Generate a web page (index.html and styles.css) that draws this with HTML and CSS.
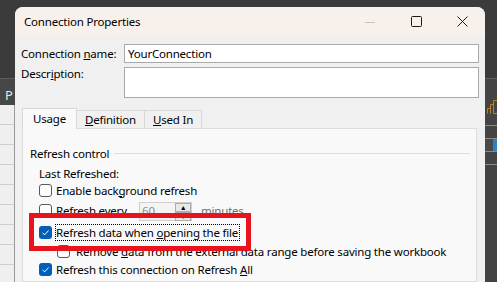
FILE: index.html
```html
<!DOCTYPE html>
<html lang="en">
<head>
    <meta charset="UTF-8">
    <meta name="viewport" content="width=device-width, initial-scale=1.0">
    <title>Connection Properties</title>
    <link rel="stylesheet" href="styles.css">
</head>
<body>
    <div class="desktop">
        <!-- worksheet behind the dialog, left edge -->
        <div class="sheet-left">
            <div class="sheet-top"></div>
            <div class="sheet-bar"><span>P</span></div>
            <div class="sheet-rows"></div>
        </div>

        <div class="dialog">
            <div class="titlebar">
                <span class="title">Connection Properties</span>
                <div class="caption">
                    <div class="cap">
                        <svg width="10" height="10" viewBox="0 0 10 10"><path d="M0 5.5H10" stroke="#c4c4c4" stroke-width="1"/></svg>
                    </div>
                    <div class="cap">
                        <svg width="11" height="11" viewBox="0 0 11 11"><rect x="0.5" y="0.5" width="10" height="10" rx="1" fill="none" stroke="#1a1a1a" stroke-width="1"/></svg>
                    </div>
                    <div class="cap">
                        <svg width="11" height="11" viewBox="0 0 11 11"><path d="M0.5 0.5L10.5 10.5M10.5 0.5L0.5 10.5" stroke="#1a1a1a" stroke-width="1"/></svg>
                    </div>
                </div>
            </div>

            <div class="dialog-body">
                <div class="field">
                    <label class="field-label">Connection <u>n</u>ame:</label>
                    <div class="text-input">YourConnection</div>
                </div>
                <div class="field field-desc">
                    <label class="field-label">Descr<u>i</u>ption:</label>
                    <div class="text-area"></div>
                </div>

                <div class="tab-area">
                    <div class="tabs">
                        <div class="tab active">Usa<u>g</u>e</div>
                        <div class="tab"><u>D</u>efinition</div>
                        <div class="tab"><u>U</u>sed In</div>
                    </div>
                    <div class="tab-panel">
                        <div class="group-title"><span>Refresh control</span><i class="group-line"></i></div>
                        <div class="row last-refreshed">Last Refreshed:</div>

                        <div class="row check-row">
                            <span class="check"></span>
                            <span>Enable back<u>g</u>round refresh</span>
                        </div>

                        <div class="row check-row every-row">
                            <span class="check"></span>
                            <span class="every-label">R<u>e</u>fresh every</span>
                            <div class="spinner">
                                <span class="spin-value">60</span>
                                <div class="spin-buttons">
                                    <div class="spin-btn">&#9650;</div>
                                    <div class="spin-btn">&#9660;</div>
                                </div>
                            </div>
                            <span class="muted">minutes</span>
                        </div>

                        <div class="row check-row open-row">
                            <span class="check checked">
                                <svg width="13" height="13" viewBox="0 0 13 13"><path d="M3.5 6.8L5.6 8.9L9.6 4.5" fill="none" stroke="#fff" stroke-width="1"/></svg>
                            </span>
                            <span class="focus-label">Refresh data when <u>o</u>pening the file</span>
                        </div>

                        <div class="row check-row sub-row">
                            <span class="check"></span>
                            <span>Remove <u>d</u>ata from the external data range before saving the workbook</span>
                        </div>

                        <div class="row check-row all-row">
                            <span class="check checked">
                                <svg width="13" height="13" viewBox="0 0 13 13"><path d="M3.5 6.8L5.6 8.9L9.6 4.5" fill="none" stroke="#fff" stroke-width="1"/></svg>
                            </span>
                            <span>Refresh this connection on Refresh <u>A</u>ll</span>
                        </div>

                        <!-- red annotation box -->
                        <div class="highlight"></div>
                    </div>
                </div>
            </div>
        </div>

        <!-- worksheet behind the dialog, right edge -->
        <div class="sheet-right">
            <div class="sheet-top"></div>
            <div class="sheet-icon">
                <svg width="11" height="14" viewBox="0 0 11 14"><path d="M0.5 13.5V8.5H3.5V13.5M3.5 13.5V4.5H6.5V13.5M6.5 13.5V0.5H10.5V13.5Z" fill="none" stroke="#c57f12" stroke-width="1"/></svg>
            </div>
            <div class="sheet-cell"></div>
            <div class="sheet-cell blue"></div>
            <div class="sheet-cell"></div>
            <div class="sheet-rest"></div>
        </div>
    </div>
</body>
</html>
```

FILE: styles.css
```css
* {
    margin: 0;
    padding: 0;
    box-sizing: border-box;
}

body {
    background: #3b3b3b;
    font-family: "Segoe UI", "Noto Sans", sans-serif;
    font-size: 11.5px;
    letter-spacing: -0.2px;
    color: #000;
    overflow: hidden;
}

.desktop {
    display: flex;
    height: 282px;
}

/* worksheet strips */
.sheet-left {
    width: 15px;
    flex-shrink: 0;
    display: flex;
    flex-direction: column;
}

.sheet-top {
    height: 79px;
    background: #3b3b3b;
    border-bottom: 1px solid #5e5e5e;
}

.sheet-bar {
    height: 26px;
    background: #474747;
    color: #e6e6e6;
    font-size: 13px;
    line-height: 13px;
    padding: 10px 0 0 5px;
}

.sheet-rows {
    flex: 1;
    background: repeating-linear-gradient(#efefef 0 19px, #cfcfcf 19px 20px);
    border-right: 1px solid #9a9a9a;
}

.sheet-right {
    flex: 1;
    display: flex;
    flex-direction: column;
    background: #444;
}

.sheet-icon {
    height: 47px;
    padding: 21px 0 0 2px;
    border-bottom: 1px solid #8a8a8a;
}

.sheet-cell {
    height: 13px;
    border-bottom: 1px solid #8a8a8a;
}

.sheet-cell.blue {
    background: linear-gradient(90deg, #4a4a4a 0 8px, #2f7fc4 8px);
}

.sheet-rest {
    flex: 1;
    background: #434343;
}

/* dialog */
.dialog {
    width: 470px;
    flex-shrink: 0;
    margin-top: 7px;
    background: #f0f0f0;
    border-radius: 8px 8px 0 0;
    display: flex;
    flex-direction: column;
    overflow: hidden;
}

.titlebar {
    height: 29px;
    background: #f8f0eb;
    display: flex;
    align-items: center;
}

.title {
    flex: 1;
    padding-left: 9px;
}

.caption {
    display: flex;
    height: 100%;
}

.cap {
    width: 46px;
    display: flex;
    align-items: center;
    justify-content: center;
}

.dialog-body {
    flex: 1;
    padding: 8px 6px 0 6px;
    display: flex;
    flex-direction: column;
}

.field {
    display: flex;
}

.field-label {
    width: 103px;
    line-height: 19px;
}

.text-input {
    width: 355px;
    height: 19px;
    background: #fff;
    border: 1px solid #a9a9a9;
    padding-left: 3px;
    line-height: 17px;
}

.field-desc {
    margin-top: 4px;
}

.field-desc .field-label {
    line-height: 14px;
}

.text-area {
    width: 355px;
    height: 31px;
    background: #fff;
    border: 1px solid #a9a9a9;
}

/* tabs */
.tab-area {
    flex: 1;
    margin: 10px 2px 0 1px;
    display: flex;
    flex-direction: column;
}

.tabs {
    display: flex;
    align-items: flex-end;
    height: 20px;
}

.tab {
    height: 18px;
    padding: 0 8px;
    border: 1px solid #d9d9d9;
    border-bottom: none;
    margin-left: -1px;
    line-height: 17px;
    background: #f0f0f0;
}

.tab.active {
    height: 21px;
    margin-left: 0;
    margin-bottom: -1px;
    padding: 0 10px;
    background: #f9f9f9;
    position: relative;
    z-index: 1;
    line-height: 20px;
}

.tab-panel {
    flex: 1;
    position: relative;
    background: #f9f9f9;
    border: 1px solid #dcdcdc;
    padding: 16px 6px 0 7px;
}

.group-title {
    display: flex;
    align-items: center;
    height: 16px;
}

.group-line {
    flex: 1;
    height: 1px;
    margin-left: 5px;
    background: #dcdcdc;
}

.row {
    display: flex;
    align-items: center;
    height: 16px;
    padding-left: 9px;
    white-space: nowrap;
}

.last-refreshed {
    margin-top: 4px;
}

.check-row {
    gap: 4px;
    margin-top: 1px;
}

.check {
    width: 13px;
    height: 13px;
    flex-shrink: 0;
    border: 1px solid #5a5a5a;
    border-radius: 3px;
    background: #fdfdfd;
}

.check.checked {
    border: none;
    background: #005fb8;
}

.check svg {
    display: block;
}

.every-row {
    height: 20px;
    margin-top: 2px;
}

.every-label {
    width: 79px;
}

.spinner {
    width: 53px;
    height: 19px;
    display: flex;
    border: 1px solid #cfcfcf;
    background: #f4f4f4;
    margin-top: 2px;
}

.spin-value {
    flex: 1;
    color: #8c8c8c;
    padding-left: 2px;
    line-height: 15px;
}

.spin-buttons {
    width: 16px;
    display: flex;
    flex-direction: column;
}

.spin-btn {
    flex: 1;
    border: 1px solid #adadad;
    background: #e9e9e9;
    font-size: 7px;
    line-height: 7px;
    text-align: center;
}

.muted {
    margin-left: 5px;
    color: #6d6d6d;
}

.open-row {
    margin-top: 4px;
}

.focus-label {
    outline: 1px dotted #000;
    outline-offset: 0;
    line-height: 15px;
    padding-right: 1px;
}

.sub-row {
    padding-left: 27px;
    margin-top: 3px;
}

.sub-row .check {
    margin-right: 2px;
}

.all-row {
    margin-top: 2px;
}

.highlight {
    position: absolute;
    left: 6px;
    top: 84px;
    width: 222px;
    height: 38px;
    border: 5px solid #e8141d;
}
```
